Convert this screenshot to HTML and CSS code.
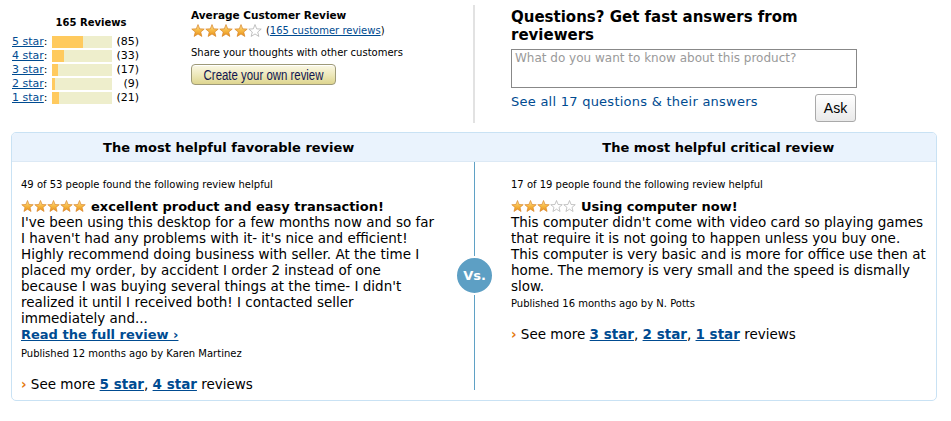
FILE: index.html
```html
<!DOCTYPE html>
<html>
<head>
<meta charset="utf-8">
<link rel="stylesheet" href="styles.css">
</head>
<body>
<svg width="0" height="0" class="defs">
  <defs>
    <linearGradient id="gold" x1="0" y1="0" x2="0" y2="1">
      <stop offset="0" stop-color="#fde7a0"/>
      <stop offset="0.5" stop-color="#f7b944"/>
      <stop offset="1" stop-color="#e8901a"/>
    </linearGradient>
    <symbol id="star" viewBox="0 0 24 23">
      <polygon points="12,1 15,8.6 23,9 16.8,14.2 18.8,22 12,17.6 5.2,22 7.2,14.2 1,9 9,8.6" fill="url(#gold)" stroke="#d8862a" stroke-width="1.3" stroke-linejoin="round"/>
    </symbol>
    <symbol id="estar" viewBox="0 0 24 23">
      <polygon points="12,1 15,8.6 23,9 16.8,14.2 18.8,22 12,17.6 5.2,22 7.2,14.2 1,9 9,8.6" fill="#fff" stroke="#aaa" stroke-width="1.3" stroke-linejoin="round"/>
    </symbol>
  </defs>
</svg>

<div class="top">
  <div class="hist">
    <div class="hist-title">165 Reviews</div>
    <div class="hrow"><a href="#" class="hlabel">5 star</a><span class="colon">:</span><span class="bar"><span class="fill" style="width:31px"></span></span><span class="cnt">(85)</span></div>
    <div class="hrow"><a href="#" class="hlabel">4 star</a><span class="colon">:</span><span class="bar"><span class="fill" style="width:12px"></span></span><span class="cnt">(33)</span></div>
    <div class="hrow"><a href="#" class="hlabel">3 star</a><span class="colon">:</span><span class="bar"><span class="fill" style="width:6px"></span></span><span class="cnt">(17)</span></div>
    <div class="hrow"><a href="#" class="hlabel">2 star</a><span class="colon">:</span><span class="bar"><span class="fill" style="width:3px"></span></span><span class="cnt">(9)</span></div>
    <div class="hrow"><a href="#" class="hlabel">1 star</a><span class="colon">:</span><span class="bar"><span class="fill" style="width:7px"></span></span><span class="cnt">(21)</span></div>
  </div>

  <div class="avg">
    <div class="avg-title">Average Customer Review</div>
    <div class="avg-stars">
      <span class="stars big">
        <svg><use href="#star"/></svg><svg><use href="#star"/></svg><svg><use href="#star"/></svg><svg><use href="#star"/></svg><svg><use href="#estar"/></svg>
      </span>
      <span class="avg-link">(<a href="#">165 customer reviews</a>)</span>
    </div>
    <div class="share">Share your thoughts with other customers</div>
    <button class="create"><span class="create-text">Create your own review</span></button>
  </div>

  <div class="vdiv"></div>

  <div class="qa">
    <div class="qa-title">Questions? Get fast answers from reviewers</div>
    <div class="qa-box">What do you want to know about this product?</div>
    <div class="qa-foot">
      <a href="#" class="qa-link">See all 17 questions &amp; their answers</a>
      <button class="ask">Ask</button>
    </div>
  </div>
</div>

<div class="compare">
  <div class="chead">
    <div class="chead-cell l">The most helpful favorable review</div>
    <div class="chead-cell r">The most helpful critical review</div>
  </div>
  <div class="cbody">
    <div class="col left">
      <div class="helpful">49 of 53 people found the following review helpful</div>
      <div class="rtitle">
        <span class="stars small"><svg><use href="#star"/></svg><svg><use href="#star"/></svg><svg><use href="#star"/></svg><svg><use href="#star"/></svg><svg><use href="#star"/></svg></span>
        <b>excellent product and easy transaction!</b>
      </div>
      <div class="rtext">I've been using this desktop for a few months now and so far I haven't had any problems with it- it's nice and efficient! Highly recommend doing business with seller. At the time I placed my order, by accident I order 2 instead of one because I was buying several things at the time- I didn't realized it until I received both! I contacted seller immediately and...</div>
      <a href="#" class="readfull">Read the full review ›</a>
      <div class="pub">Published 12 months ago by Karen Martinez</div>
      <div class="seemore"><span class="arr">›</span> See more <a href="#">5 star</a>, <a href="#">4 star</a> reviews</div>
    </div>
    <div class="mid"><div class="vs">Vs.</div></div>
    <div class="col right">
      <div class="helpful">17 of 19 people found the following review helpful</div>
      <div class="rtitle">
        <span class="stars small"><svg><use href="#star"/></svg><svg><use href="#star"/></svg><svg><use href="#star"/></svg><svg><use href="#estar"/></svg><svg><use href="#estar"/></svg></span>
        <b>Using computer now!</b>
      </div>
      <div class="rtext">This computer didn't come with video card so playing games that require it is not going to happen unless you buy one. This computer is very basic and is more for office use then at home. The memory is very small and the speed is dismally slow.</div>
      <div class="pub">Published 16 months ago by N. Potts</div>
      <div class="seemore"><span class="arr">›</span> See more <a href="#">3 star</a>, <a href="#">2 star</a>, <a href="#">1 star</a> reviews</div>
    </div>
  </div>
</div>
</body>
</html>
```

FILE: styles.css
```css
* { box-sizing: border-box; }
body {
  margin: 0;
  background: #fff;
  font-family: "DejaVu Sans", Verdana, sans-serif;
  color: #000;
}
.defs { position: absolute; width: 0; height: 0; }
a { color: #004b91; }

.top {
  display: flex;
  height: 124px;
  padding-top: 5px;
}

/* histogram */
.hist {
  width: 180px;
  padding-left: 12px;
  font-size: 11px;
}
.hist-title {
  font-weight: bold;
  font-size: 10px;
  text-align: center;
  width: 158px;
  margin-top: 11px;
  height: 19px;
  line-height: 14px;
}
.hrow {
  position: relative;
  display: flex;
  align-items: center;
  height: 14px;
  line-height: 14px;
}
.hlabel { display: inline-block; }
.bar {
  position: absolute;
  left: 40px;
  top: 1px;
  width: 60px;
  height: 12px;
  background: #eeeecc;
}
.fill {
  display: block;
  height: 12px;
  background: #ffca5e;
}
.cnt {
  position: absolute;
  left: 100px;
  width: 27px;
  text-align: right;
}

/* average */
.avg {
  width: 293px;
  padding-left: 11px;
  font-size: 10px;
}
.avg-title {
  font-weight: bold;
  font-size: 10.5px;
  height: 15px;
  line-height: 14px;
  margin-top: 3px;
}
.avg-stars {
  display: flex;
  align-items: center;
  height: 14px;
  gap: 4px;
}
.stars { display: inline-flex; }
.stars svg { display: block; }
.stars.big svg { width: 14px; height: 13px; margin-right: 0.2px; }
.stars.small svg { width: 13px; height: 12px; }
.share {
  margin-top: 9px;
  height: 14px;
  line-height: 14px;
}
.create {
  display: block;
  margin-top: 4px;
  height: 21px;
  width: 145px;
  padding: 0;
  border: 1px solid #9e9a78;
  border-radius: 4px;
  background: linear-gradient(#fbf8e6, #ece7b8 55%, #ded58f);
  font-family: "Liberation Sans", Arial, sans-serif;
  font-size: 14px;
  color: #101550;
  box-shadow: inset 0 1px 0 #fff;
  white-space: nowrap;
  overflow: hidden;
}
.create-text {
  display: inline-block;
  transform: scaleX(0.815);
  transform-origin: center;
  margin: 0 -14px;
}

.vdiv {
  width: 2px;
  background: #e2e2e2;
  height: 118px;
}

/* questions */
.qa {
  padding-left: 36px;
  width: 384px;
}
.qa-title {
  font-size: 15px;
  font-weight: bold;
  line-height: 18px;
  margin-top: 3px;
}
.qa-box {
  margin-top: 5px;
  width: 346px;
  height: 39px;
  border: 1px solid #888;
  font-size: 12px;
  color: #9a9a9a;
  padding: 1px 3px;
  line-height: 14px;
}
.qa-foot {
  display: flex;
  justify-content: space-between;
}
.qa-link {
  font-size: 13px;
  letter-spacing: 0.25px;
  text-decoration: none;
  margin-top: 7px;
  line-height: 14px;
}
.ask {
  margin-top: 6px;
  margin-right: 3px;
  width: 41px;
  height: 28px;
  border: 1px solid #a9a9a9;
  border-radius: 3px;
  background: linear-gradient(#fff, #e9e9e9);
  font-family: "Liberation Sans", Arial, sans-serif;
  font-size: 14px;
  padding: 0;
}

/* comparison box */
.compare {
  margin: 8px 14px 0 11px;
  border: 1px solid #c9e2f4;
  border-radius: 5px;
  height: 269px;
  overflow: hidden;
}
.chead {
  display: flex;
  background: #eaf3fd;
  height: 29px;
  border-bottom: 1px solid #dce9f5;
}
.chead-cell {
  text-align: center;
  font-weight: bold;
  font-size: 13px;
  line-height: 29px;
}
.chead-cell.l { width: 463px; padding: 0 38px 0 9px; }
.chead-cell.r { width: 462px; padding: 0 10px 0 36px; }
.cbody {
  display: flex;
  height: 238px;
}
.col { font-size: 13.5px; }
.col.left { padding: 15px 34px 0 9px; width: 462px; }
.col.right { padding: 15px 6px 0 36px; width: 461px; }
.mid {
  position: relative;
  width: 1px;
  background: #5fa1c5;
  margin-bottom: 10px;
}
.vs {
  position: absolute;
  left: -19px;
  top: 94px;
  width: 35px;
  height: 35px;
  border-radius: 50%;
  background: #5d9fc4;
  color: #fff;
  font-weight: bold;
  font-size: 13px;
  line-height: 35px;
  text-align: center;
  border: 2px solid #fff;
  box-sizing: content-box;
}
.helpful {
  font-size: 10px;
  line-height: 14px;
  margin-top: 1px;
}
.rtitle {
  display: flex;
  align-items: center;
  gap: 5px;
  margin-top: 6px;
  height: 16px;
}
.rtitle b { font-size: 13px; }
.rtext { line-height: 16px; }
.readfull {
  display: block;
  font-weight: bold;
  font-size: 13px;
  line-height: 18px;
}
.pub {
  font-size: 10px;
  line-height: 14px;
  margin-top: 3px;
}
.seemore {
  margin-top: 15px;
  line-height: 16px;
}
.seemore a { font-weight: bold; }
.arr { color: #e47911; font-weight: bold; }
```
